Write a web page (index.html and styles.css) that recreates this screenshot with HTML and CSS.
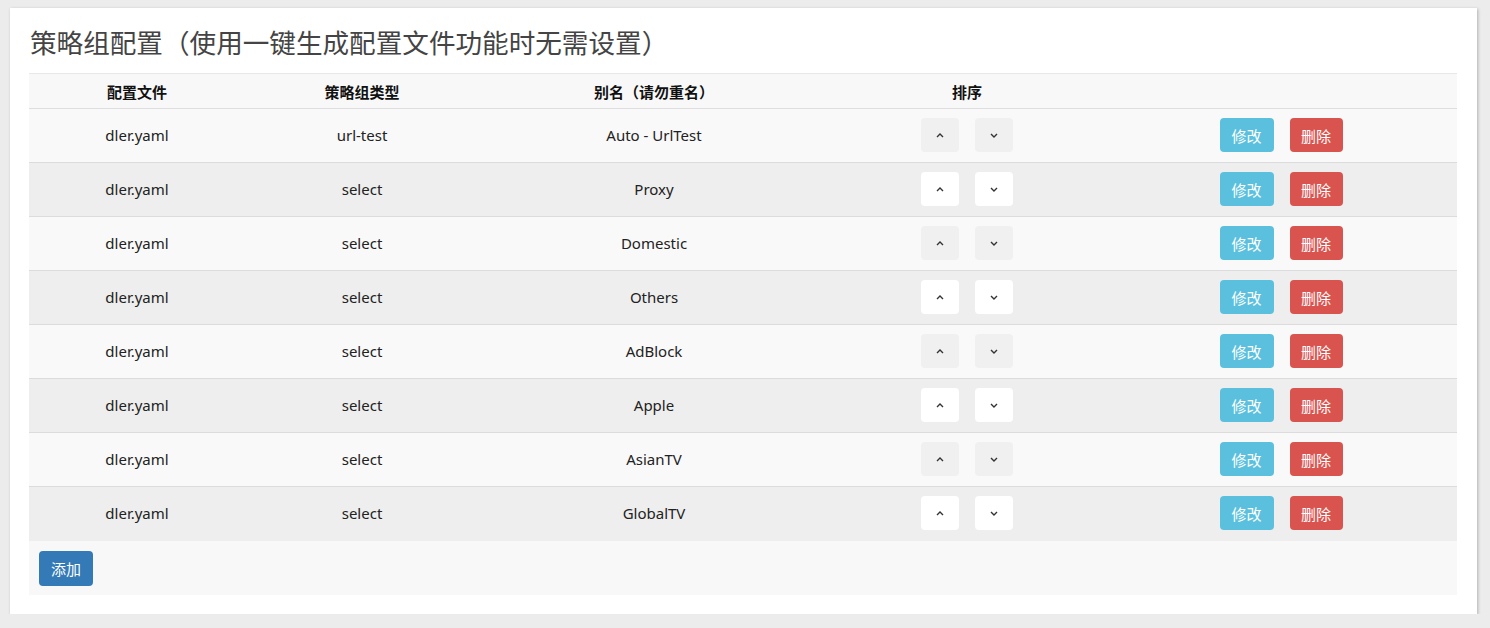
FILE: index.html
```html
<!DOCTYPE html>
<html lang="zh-CN">
<head>
<meta charset="utf-8">
<title>策略组配置</title>
<link rel="stylesheet" href="styles.css">
</head>
<body>
<div class="card">
  <h3 class="title">策略组配置（使用一键生成配置文件功能时无需设置）</h3>
  <div class="panel">
    <table class="grid">
      <colgroup>
        <col class="c1"><col class="c2"><col class="c3"><col class="c4"><col class="c5">
      </colgroup>
      <thead>
        <tr><th>配置文件</th><th>策略组类型</th><th>别名（请勿重名）</th><th>排序</th><th></th></tr>
      </thead>
      <tbody>
        <tr><td>dler.yaml</td><td>url-test</td><td>Auto - UrlTest</td>
          <td><div class="sort"><button class="arrow"><svg width="8" height="5" viewBox="0 0 8 5"><polyline points="1,4 4,1 7,4" fill="none" stroke="#333" stroke-width="1.4"/></svg></button><button class="arrow"><svg width="8" height="5" viewBox="0 0 8 5"><polyline points="1,1 4,4 7,1" fill="none" stroke="#333" stroke-width="1.4"/></svg></button></div></td>
          <td><div class="ops"><button class="btn info">修改</button><button class="btn danger">删除</button></div></td></tr>
        <tr><td>dler.yaml</td><td>select</td><td>Proxy</td>
          <td><div class="sort"><button class="arrow"><svg width="8" height="5" viewBox="0 0 8 5"><polyline points="1,4 4,1 7,4" fill="none" stroke="#333" stroke-width="1.4"/></svg></button><button class="arrow"><svg width="8" height="5" viewBox="0 0 8 5"><polyline points="1,1 4,4 7,1" fill="none" stroke="#333" stroke-width="1.4"/></svg></button></div></td>
          <td><div class="ops"><button class="btn info">修改</button><button class="btn danger">删除</button></div></td></tr>
        <tr><td>dler.yaml</td><td>select</td><td>Domestic</td>
          <td><div class="sort"><button class="arrow"><svg width="8" height="5" viewBox="0 0 8 5"><polyline points="1,4 4,1 7,4" fill="none" stroke="#333" stroke-width="1.4"/></svg></button><button class="arrow"><svg width="8" height="5" viewBox="0 0 8 5"><polyline points="1,1 4,4 7,1" fill="none" stroke="#333" stroke-width="1.4"/></svg></button></div></td>
          <td><div class="ops"><button class="btn info">修改</button><button class="btn danger">删除</button></div></td></tr>
        <tr><td>dler.yaml</td><td>select</td><td>Others</td>
          <td><div class="sort"><button class="arrow"><svg width="8" height="5" viewBox="0 0 8 5"><polyline points="1,4 4,1 7,4" fill="none" stroke="#333" stroke-width="1.4"/></svg></button><button class="arrow"><svg width="8" height="5" viewBox="0 0 8 5"><polyline points="1,1 4,4 7,1" fill="none" stroke="#333" stroke-width="1.4"/></svg></button></div></td>
          <td><div class="ops"><button class="btn info">修改</button><button class="btn danger">删除</button></div></td></tr>
        <tr><td>dler.yaml</td><td>select</td><td>AdBlock</td>
          <td><div class="sort"><button class="arrow"><svg width="8" height="5" viewBox="0 0 8 5"><polyline points="1,4 4,1 7,4" fill="none" stroke="#333" stroke-width="1.4"/></svg></button><button class="arrow"><svg width="8" height="5" viewBox="0 0 8 5"><polyline points="1,1 4,4 7,1" fill="none" stroke="#333" stroke-width="1.4"/></svg></button></div></td>
          <td><div class="ops"><button class="btn info">修改</button><button class="btn danger">删除</button></div></td></tr>
        <tr><td>dler.yaml</td><td>select</td><td>Apple</td>
          <td><div class="sort"><button class="arrow"><svg width="8" height="5" viewBox="0 0 8 5"><polyline points="1,4 4,1 7,4" fill="none" stroke="#333" stroke-width="1.4"/></svg></button><button class="arrow"><svg width="8" height="5" viewBox="0 0 8 5"><polyline points="1,1 4,4 7,1" fill="none" stroke="#333" stroke-width="1.4"/></svg></button></div></td>
          <td><div class="ops"><button class="btn info">修改</button><button class="btn danger">删除</button></div></td></tr>
        <tr><td>dler.yaml</td><td>select</td><td>AsianTV</td>
          <td><div class="sort"><button class="arrow"><svg width="8" height="5" viewBox="0 0 8 5"><polyline points="1,4 4,1 7,4" fill="none" stroke="#333" stroke-width="1.4"/></svg></button><button class="arrow"><svg width="8" height="5" viewBox="0 0 8 5"><polyline points="1,1 4,4 7,1" fill="none" stroke="#333" stroke-width="1.4"/></svg></button></div></td>
          <td><div class="ops"><button class="btn info">修改</button><button class="btn danger">删除</button></div></td></tr>
        <tr><td>dler.yaml</td><td>select</td><td>GlobalTV</td>
          <td><div class="sort"><button class="arrow"><svg width="8" height="5" viewBox="0 0 8 5"><polyline points="1,4 4,1 7,4" fill="none" stroke="#333" stroke-width="1.4"/></svg></button><button class="arrow"><svg width="8" height="5" viewBox="0 0 8 5"><polyline points="1,1 4,4 7,1" fill="none" stroke="#333" stroke-width="1.4"/></svg></button></div></td>
          <td><div class="ops"><button class="btn info">修改</button><button class="btn danger">删除</button></div></td></tr>
      </tbody>
    </table>
    <div class="footer"><button class="btn primary">添加</button></div>
  </div>
</div>
</body>
</html>
```
FILE: styles.css
```css
* { box-sizing: border-box; }
html, body { margin: 0; padding: 0; }
body {
  background: #ececec;
  font-family: "Noto Sans", "Noto Sans CJK SC", sans-serif;
  font-size: 15px;
  color: #222;
  padding: 8px 13px 0 10px;
}
.card {
  background: #fff;
  box-shadow: 1px 1px 3px rgba(0,0,0,0.25);
  padding: 16px 20px 20px 19px;
  height: 606px;
}
.title {
  margin: 0 0 13px 1px;
  font-size: 26.6px;
  line-height: 36px;
  font-weight: normal;
  color: #444;
  font-family: "Noto Sans CJK SC", sans-serif;
}
.panel { background: #f8f8f8; }
.grid {
  width: 100%;
  border-collapse: collapse;
  table-layout: fixed;
}
.c1 { width: 216px; }
.c2 { width: 234px; }
.c3 { width: 350px; }
.c4 { width: 276px; }
.c5 { width: 352px; }
.grid th {
  height: 35px;
  font-weight: bold;
  font-size: 15px;
  text-align: center;
  border-top: 1px solid #e8e8e8;
  border-bottom: 1px solid #dedede;
  background: #f8f8f8;
  color: #111;
  font-family: "Noto Sans CJK SC", sans-serif;
  padding: 0 8px;
}
.grid td {
  height: 54px;
  text-align: center;
  vertical-align: middle;
  border-top: 1px solid #dcdcdc;
  padding: 0 8px 1px;
}
.grid tbody tr:first-child td { border-top: none; }
.grid tbody tr:nth-child(odd) { background: #f9f9f9; }
.grid tbody tr:nth-child(even) { background: #eeeeee; }
.sort, .ops {
  display: flex;
  justify-content: center;
  gap: 16px;
}
.arrow {
  width: 38px;
  height: 34px;
  border: none;
  border-radius: 4px;
  background: #f0f0f0;
  display: flex;
  align-items: center;
  justify-content: center;
  padding: 0;
}
.grid tbody tr:nth-child(even) .arrow { background: #fff; }
.btn {
  height: 34px;
  padding: 0;
  border: none;
  border-radius: 4px;
  color: #fff;
  font-size: 15px;
  font-family: "Noto Sans CJK SC", sans-serif;
}
.info { background: #5bc0de; width: 54px; }
.danger { background: #d9534f; width: 53px; }
.primary { background: #337ab7; width: 54px; height: 35px; }
.footer { padding: 10px; height: 54px; }
```
